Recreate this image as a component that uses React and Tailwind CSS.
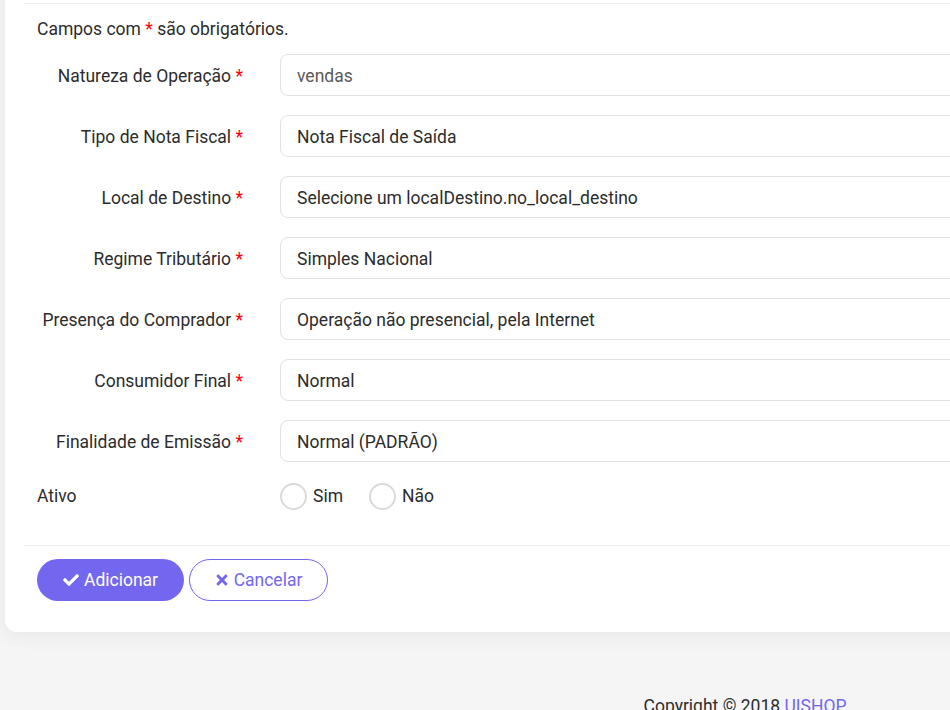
import React, { useState } from 'react';
import { FaCheck, FaTimes } from 'react-icons/fa';

const fields = [
  { label: 'Natureza de Operação', value: 'vendas', muted: true },
  { label: 'Tipo de Nota Fiscal', value: 'Nota Fiscal de Saída' },
  { label: 'Local de Destino', value: 'Selecione um localDestino.no_local_destino' },
  { label: 'Regime Tributário', value: 'Simples Nacional' },
  { label: 'Presença do Comprador', value: 'Operação não presencial, pela Internet' },
  { label: 'Consumidor Final', value: 'Normal' },
  { label: 'Finalidade de Emissão', value: 'Normal (PADRÃO)' },
];

const Radio = ({ label, checked, onClick }) => (
  <button type="button" onClick={onClick} className="flex items-center gap-[6px]">
    <span className="w-[27px] h-[27px] rounded-full border-2 border-[#dcdad6] bg-white flex items-center justify-center">
      {checked && <span className="w-[11px] h-[11px] rounded-full bg-[#7367f0]" />}
    </span>
    <span className="text-[17.5px] text-[#2c2c2c]">{label}</span>
  </button>
);

export default function App() {
  const [ativo, setAtivo] = useState(null);

  return (
    <div className="w-full h-screen overflow-hidden bg-[#f5f5f5]" style={{ fontFamily: 'Roboto, "Liberation Sans", sans-serif' }}>
      <div className="w-[1490px]">
        {/* Card */}
        <div className="ml-[5px] -mt-[20px] bg-white rounded-[12px] shadow-[0_4px_20px_rgba(0,0,0,0.06)]">
          <div className="pt-[23px] px-[19px]">
            <div className="border-t border-[#ededed] pt-[14px]">
              <p className="pl-[13px] text-[17.5px] text-[#2c2c2c] leading-[22px]">
                Campos com <span className="text-[#ff0000]">*</span> são obrigatórios.
              </p>

              <div className="mt-[14px] flex flex-col gap-[19px]">
                {fields.map((f) => (
                  <div key={f.label} className="flex items-center">
                    <label className="w-[219px] shrink-0 pt-[2px] text-right text-[17.5px] text-[#2c2c2c]">
                      {f.label} <span className="text-[#ff0000]">*</span>
                    </label>
                    <div className="ml-[37px] flex-1 h-[42px] flex items-center border border-[#e2e2e2] rounded-[8px] px-[16px] pt-[2px]">
                      <span className={`text-[17.5px] ${f.muted ? 'text-[#5a5a5a]' : 'text-[#2c2c2c]'}`}>{f.value}</span>
                    </div>
                  </div>
                ))}

                <div className="flex items-center mt-[2px]">
                  <label className="w-[219px] shrink-0 pl-[13px] text-[17.5px] text-[#2c2c2c]">Ativo</label>
                  <div className="ml-[37px] flex items-center gap-[26px]">
                    <Radio label="Sim" checked={ativo === 'sim'} onClick={() => setAtivo('sim')} />
                    <Radio label="Não" checked={ativo === 'nao'} onClick={() => setAtivo('nao')} />
                  </div>
                </div>
              </div>
            </div>

            <div className="mt-[35px] border-t border-[#ededed] pt-[13px] pb-[31px] pl-[13px] flex items-center gap-[5px]">
              <button className="h-[42px] w-[147px] rounded-full bg-[#7367f0] text-white text-[17.5px] flex items-center justify-center gap-[5px]">
                <FaCheck className="w-[16px] h-[16px]" /> Adicionar
              </button>
              <button className="h-[42px] w-[139px] rounded-full border border-[#7367f0] text-[#7367f0] text-[17.5px] flex items-center justify-center gap-[5px]">
                <FaTimes className="w-[14px] h-[16px]" /> Cancelar
              </button>
            </div>
          </div>
        </div>

        {/* Footer */}
        <footer className="pt-[61px] text-center text-[17.5px] text-[#2c2c2c]">
          Copyright © 2018 <span className="text-[#7367f0]">UISHOP</span>
        </footer>
      </div>
    </div>
  );
}
